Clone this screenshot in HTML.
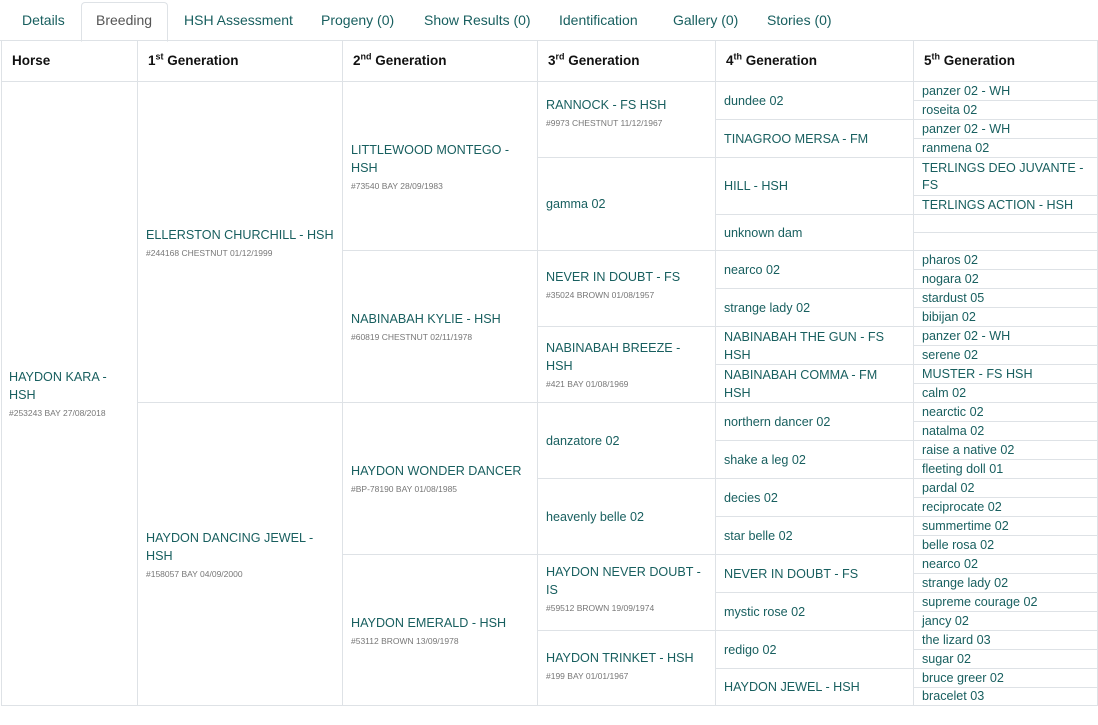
<!DOCTYPE html>
<html><head><meta charset="utf-8"><style>
*{box-sizing:border-box}
body{margin:0;background:#fff;font-family:"Liberation Sans",sans-serif;width:1098px;height:725px;overflow:hidden;position:relative}
.tabs{position:absolute;left:0;top:0;width:1098px;height:41px;border-bottom:1px solid #dee2e6}
.tab{position:absolute;top:12px;font-size:14px;color:#185f5f;white-space:nowrap}
.act{position:absolute;left:81px;top:2px;width:87px;height:40px;border:1px solid #dee2e6;border-bottom:1px solid #fff;border-radius:4px 4px 0 0;background:#fff}
table{position:absolute;left:1px;top:40px;border-collapse:collapse;table-layout:fixed;width:1096px}
td,th{border:1px solid #dee2e6;padding:0 8px;font-size:12.6px;line-height:18px;color:#185f5f;vertical-align:middle;overflow:hidden;text-align:left;font-weight:normal}
th{height:41px;color:#111;font-weight:bold;font-size:13.5px;padding-left:10px}
th sup{font-size:9px;line-height:0}
.s{display:block;font-size:8.5px;color:#777;line-height:12px;margin-top:3px}
td.f{padding:0 8px;line-height:17px}
td.h{padding-left:7px}
</style></head><body>
<div class="tabs"></div>
<div class="act"></div>
<div class="tab" style="left:22px">Details</div>
<div class="tab" style="left:96px;color:#555">Breeding</div>
<div class="tab" style="left:184px">HSH Assessment</div>
<div class="tab" style="left:321px">Progeny (0)</div>
<div class="tab" style="left:424px">Show Results (0)</div>
<div class="tab" style="left:559px">Identification</div>
<div class="tab" style="left:673px">Gallery (0)</div>
<div class="tab" style="left:767px">Stories (0)</div>
<table>
<colgroup><col style="width:136px"><col style="width:205px"><col style="width:195px"><col style="width:178px"><col style="width:198px"><col style="width:184px"></colgroup>
<tr><th>Horse</th><th>1<sup>st</sup> Generation</th><th>2<sup>nd</sup> Generation</th><th>3<sup>rd</sup> Generation</th><th>4<sup>th</sup> Generation</th><th>5<sup>th</sup> Generation</th></tr>
<tr style="height:19px"><td rowspan="32" class="h">HAYDON KARA -<br>HSH<span class="s">#253243 BAY 27/08/2018</span></td><td rowspan="16" style="white-space:nowrap">ELLERSTON CHURCHILL - HSH<span class="s">#244168 CHESTNUT 01/12/1999</span></td><td rowspan="8">LITTLEWOOD MONTEGO -<br>HSH<span class="s">#73540 BAY 28/09/1983</span></td><td rowspan="4" style="padding-bottom:14px">RANNOCK - FS HSH<span class="s">#9973 CHESTNUT 11/12/1967</span></td><td rowspan="2">dundee 02</td><td class="f">panzer 02 - WH</td></tr>
<tr style="height:19px"><td class="f">roseita 02</td></tr>
<tr style="height:19px"><td rowspan="2">TINAGROO MERSA - FM</td><td class="f">panzer 02 - WH</td></tr>
<tr style="height:19px"><td class="f">ranmena 02</td></tr>
<tr style="height:38px"><td rowspan="4">gamma 02</td><td rowspan="2">HILL - HSH</td><td class="f">TERLINGS DEO JUVANTE -<br>FS</td></tr>
<tr style="height:19px"><td class="f">TERLINGS ACTION - HSH</td></tr>
<tr style="height:18px"><td rowspan="2">unknown dam</td><td class="f"></td></tr>
<tr style="height:18px"><td class="f"></td></tr>
<tr style="height:19px"><td rowspan="8">NABINABAH KYLIE - HSH<span class="s">#60819 CHESTNUT 02/11/1978</span></td><td rowspan="4" style="padding-bottom:8px">NEVER IN DOUBT - FS<span class="s">#35024 BROWN 01/08/1957</span></td><td rowspan="2">nearco 02</td><td class="f">pharos 02</td></tr>
<tr style="height:19px"><td class="f">nogara 02</td></tr>
<tr style="height:19px"><td rowspan="2">strange lady 02</td><td class="f">stardust 05</td></tr>
<tr style="height:19px"><td class="f">bibijan 02</td></tr>
<tr style="height:19px"><td rowspan="4">NABINABAH BREEZE -<br>HSH<span class="s">#421 BAY 01/08/1969</span></td><td rowspan="2">NABINABAH THE GUN - FS<br>HSH</td><td class="f">panzer 02 - WH</td></tr>
<tr style="height:19px"><td class="f">serene 02</td></tr>
<tr style="height:19px"><td rowspan="2">NABINABAH COMMA - FM<br>HSH</td><td class="f">MUSTER - FS HSH</td></tr>
<tr style="height:19px"><td class="f">calm 02</td></tr>
<tr style="height:19px"><td rowspan="16">HAYDON DANCING JEWEL -<br>HSH<span class="s">#158057 BAY 04/09/2000</span></td><td rowspan="8">HAYDON WONDER DANCER<span class="s">#BP-78190 BAY 01/08/1985</span></td><td rowspan="4">danzatore 02</td><td rowspan="2">northern dancer 02</td><td class="f">nearctic 02</td></tr>
<tr style="height:19px"><td class="f">natalma 02</td></tr>
<tr style="height:19px"><td rowspan="2">shake a leg 02</td><td class="f">raise a native 02</td></tr>
<tr style="height:19px"><td class="f">fleeting doll 01</td></tr>
<tr style="height:19px"><td rowspan="4">heavenly belle 02</td><td rowspan="2">decies 02</td><td class="f">pardal 02</td></tr>
<tr style="height:19px"><td class="f">reciprocate 02</td></tr>
<tr style="height:19px"><td rowspan="2">star belle 02</td><td class="f">summertime 02</td></tr>
<tr style="height:19px"><td class="f">belle rosa 02</td></tr>
<tr style="height:19px"><td rowspan="8">HAYDON EMERALD - HSH<span class="s">#53112 BROWN 13/09/1978</span></td><td rowspan="4" style="padding-bottom:8px">HAYDON NEVER DOUBT -<br>IS<span class="s">#59512 BROWN 19/09/1974</span></td><td rowspan="2">NEVER IN DOUBT - FS</td><td class="f">nearco 02</td></tr>
<tr style="height:19px"><td class="f">strange lady 02</td></tr>
<tr style="height:19px"><td rowspan="2">mystic rose 02</td><td class="f">supreme courage 02</td></tr>
<tr style="height:19px"><td class="f">jancy 02</td></tr>
<tr style="height:19px"><td rowspan="4" style="padding-bottom:6px">HAYDON TRINKET - HSH<span class="s">#199 BAY 01/01/1967</span></td><td rowspan="2">redigo 02</td><td class="f">the lizard 03</td></tr>
<tr style="height:19px"><td class="f">sugar 02</td></tr>
<tr style="height:19px"><td rowspan="2">HAYDON JEWEL - HSH</td><td class="f">bruce greer 02</td></tr>
<tr style="height:18px"><td class="f">bracelet 03</td></tr>
</table>
</body></html>
